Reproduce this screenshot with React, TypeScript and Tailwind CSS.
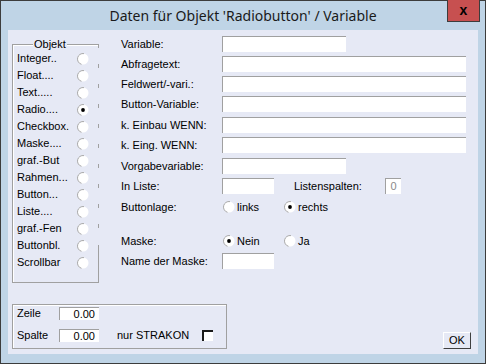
import React from "react";

const F = "font-['Liberation_Sans',Arial,sans-serif]";

function Radio({ checked }: { checked?: boolean }) {
  return (
    <svg width="12" height="12" viewBox="0 0 12 12" className="shrink-0">
      <circle cx="6" cy="6" r="5.5" fill="#fff" />
      <path d="M7 0.6 A5.5 5.5 0 0 0 4.5 11.3" fill="none" stroke="#a8a8a8" strokeWidth="1" />
      {checked && <circle cx="6" cy="6" r="1.9" fill="#000" />}
    </svg>
  );
}

function Input({ w, h = 16, children, className = "" }: { w: number; h?: number; children?: React.ReactNode; className?: string }) {
  return (
    <div
      className={`bg-white border-t border-l border-[#a0a0a0] flex items-center shrink-0 ${className}`}
      style={{ width: w, height: h }}
    >
      {children}
    </div>
  );
}

function Row({ label, mt, children }: { label: string; mt: string; children: React.ReactNode }) {
  return (
    <div className={`flex items-center h-[16px] ${mt}`}>
      <div className="w-[101px] shrink-0 whitespace-nowrap">{label}</div>
      {children}
    </div>
  );
}

const objekte: [string, boolean][] = [
  ["Integer..", false],
  ["Float....", false],
  ["Text.....", false],
  ["Radio....", true],
  ["Checkbox.", false],
  ["Maske....", false],
  ["graf.-But", false],
  ["Rahmen...", false],
  ["Button...", false],
  ["Liste....", false],
  ["graf.-Fen", false],
  ["Buttonbl.", false],
  ["Scrollbar", false],
];

export default function App() {
  return (
    <div className={`w-[486px] h-[364px] border border-[#3c3c3c] bg-[#bfd4e6] flex flex-col ${F} text-[11px] text-black`}>
      {/* title bar */}
      <div className="h-[29px] relative flex items-center justify-center shrink-0">
        <span className="font-['Noto_Sans',sans-serif] text-[14px] text-[#1a1a1a] leading-none">
          Daten für Objekt 'Radiobutton' / Variable
        </span>
        <div className="absolute top-[-1px] right-[5px] w-[33px] h-[22px] bg-[#c75050] border border-[#3c3c3c] border-t-0 flex items-center justify-center">
          <span className="font-bold text-[14px] leading-none text-black mt-[-2px]">x</span>
        </div>
      </div>

      {/* client */}
      <div className="mx-[7px] h-[324px] bg-[#e6e9f5] pl-[4px] pt-[6px] flex flex-col shrink-0">
        <div className="flex items-start">
          {/* Objekt group */}
          <div className="relative mt-[8px] w-[87px] h-[239px] border border-[#a0a0a0] border-r-transparent shadow-[inset_1px_1px_0_#fff] pl-[4px] pt-[5px] shrink-0">
            <span className="absolute top-[-8px] left-[20px] px-[1px] bg-[#e6e9f5] leading-[14px]">Objekt</span>
            <div className="absolute right-[-1px] top-[-1px] h-[200px] w-[1px] bg-[repeating-linear-gradient(to_bottom,#a0a0a0_0_4px,transparent_4px_20px)]" />
            <div className="absolute right-[-1px] bottom-[-1px] h-[38px] w-[1px] bg-[#a0a0a0]" />
            {objekte.map(([l, c]) => (
              <div key={l} className="flex items-center h-[17px]">
                <div className="w-[60px] whitespace-nowrap">{l}</div>
                <Radio checked={c} />
              </div>
            ))}
          </div>

          {/* form */}
          <div className="ml-[22px] flex flex-col">
            <Row label="Variable:" mt="mt-0">
              <Input w={124} />
            </Row>
            <Row label="Abfragetext:" mt="mt-[4px]">
              <Input w={244} />
            </Row>
            <Row label="Feldwert/-vari.:" mt="mt-[4px]">
              <Input w={244} />
            </Row>
            <Row label="Button-Variable:" mt="mt-[4px]">
              <Input w={244} />
            </Row>
            <Row label="k. Einbau WENN:" mt="mt-[5px]">
              <Input w={244} />
            </Row>
            <Row label="k. Eing. WENN:" mt="mt-[4px]">
              <Input w={244} />
            </Row>
            <Row label="Vorgabevariable:" mt="mt-[5px]">
              <Input w={124} />
            </Row>
            <Row label="In Liste:" mt="mt-[4px]">
              <Input w={52} />
              <div className="ml-[20px] w-[91px] whitespace-nowrap">Listenspalten:</div>
              <Input w={16} className="justify-center text-[#8a8a8a]">0</Input>
            </Row>
            <Row label="Buttonlage:" mt="mt-[5px]">
              <div className="flex items-center ml-[1px] w-[61px]">
                <Radio />
                <span className="ml-[2px]">links</span>
              </div>
              <div className="flex items-center">
                <Radio checked />
                <span className="ml-[2px]">rechts</span>
              </div>
            </Row>
            <Row label="Maske:" mt="mt-[18px]">
              <div className="flex items-center ml-[1px] w-[61px]">
                <Radio checked />
                <span className="ml-[2px]">Nein</span>
              </div>
              <div className="flex items-center">
                <Radio />
                <span className="ml-[2px]">Ja</span>
              </div>
            </Row>
            <Row label="Name der Maske:" mt="mt-[4px]">
              <Input w={52} />
            </Row>
          </div>
        </div>

        {/* bottom row */}
        <div className="mt-[21px] flex items-end">
          <div className="w-[215px] h-[45px] border border-[#a0a0a0] shadow-[inset_1px_1px_0_#fff] pl-[4px] pt-[2px] flex flex-col shrink-0">
            <div className="flex items-center h-[13px]">
              <div className="w-[42px]">Zeile</div>
              <Input w={40} h={13} className="justify-end pr-[4px]">0.00</Input>
            </div>
            <div className="flex items-center h-[13px] mt-[9px]">
              <div className="w-[42px]">Spalte</div>
              <Input w={40} h={13} className="justify-end pr-[4px]">0.00</Input>
              <div className="ml-[18px] w-[85px] whitespace-nowrap">nur STRAKON</div>
              <div className="w-[11px] h-[11px] bg-white border-t-2 border-l-2 border-[#1a1a1a]" />
            </div>
          </div>
          <div className="ml-[216px] w-[28px] h-[17px] border-t border-l border-white border-r border-b border-r-[#404040] border-b-[#404040] flex items-center justify-center shrink-0">
            OK
          </div>
        </div>
      </div>
    </div>
  );
}
